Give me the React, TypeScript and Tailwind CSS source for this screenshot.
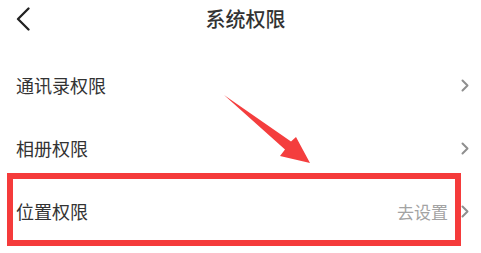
const font = { fontFamily: '"Noto Sans CJK SC", "Noto Sans", sans-serif' };

function RowChevron() {
  return (
    <svg width="8" height="13" viewBox="0 0 8 13" className="shrink-0">
      <path d="M1.5 1.5 L6.5 6.5 L1.5 11.5" fill="none" stroke="#8f8f8f" strokeWidth="2" strokeLinecap="round" strokeLinejoin="round" />
    </svg>
  );
}

function Row({ label, value }: { label: string; value?: string }) {
  return (
    <div className="flex h-[63px] items-center pl-4 pr-[12px]">
      <span className="flex-1 text-[18px] text-[#333]">{label}</span>
      {value && <span className="mr-[13px] text-[17px] text-[#a3a3a3]">{value}</span>}
      <RowChevron />
    </div>
  );
}

export default function App() {
  return (
    <div className="relative h-[253px] w-[481px] overflow-hidden bg-white" style={font}>
      <header className="relative flex h-[38px] items-center justify-center pl-[10px]">
        <svg className="absolute left-[15px] top-[7px]" width="16" height="24" viewBox="0 0 16 24">
          <path d="M13.5 1.5 L3 12 L13.5 22.5" fill="none" stroke="#222" strokeWidth="2.3" strokeLinecap="round" strokeLinejoin="round" />
        </svg>
        <span className="text-[20px] font-medium text-[#333]">系统权限</span>
      </header>
      <div className="pt-4">
        <Row label="通讯录权限" />
        <Row label="相册权限" />
        <Row label="位置权限" value="去设置" />
      </div>

      <div className="absolute left-[7px] top-[173px] h-[73px] w-[454px] border-[6px] border-[#f53b3b]" />

      <svg className="absolute left-0 top-0" width="481" height="253" viewBox="0 0 481 253">
        <path d="M224 95 L291 141.5 L296 137 L310 163 L280 156 L285 149.5 Z" fill="#f43e3e" />
      </svg>
    </div>
  );
}
